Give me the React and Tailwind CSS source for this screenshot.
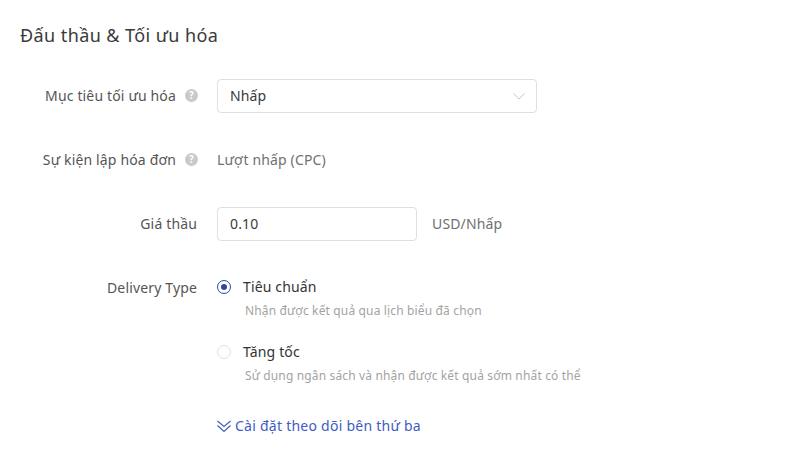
import React from 'react';

function Help() {
    return (
        <span className="ml-[9px] w-[13px] h-[13px] rounded-full bg-[#c8c9cc] text-white text-[10px] leading-[13px] font-bold text-center shrink-0 tracking-normal">?</span>
    );
}

function Label({ children, help }) {
    return (
        <div className={`w-[217px] shrink-0 flex items-center justify-end pb-[2px] ${help ? 'pr-[19px]' : 'pr-[20px]'}`}>
            <span>{children}</span>
            {help && <Help />}
        </div>
    );
}

function Radio({ checked, title, hint }) {
    return (
        <div>
            <div className="flex items-center h-[20px]">
                <span className={`w-[14px] h-[14px] rounded-full border flex items-center justify-center ${checked ? 'border-[#2b4a9b]' : 'border-[#dcdfe6]'}`}>
                    {checked && <span className="w-[6px] h-[6px] rounded-full bg-[#2b4a9b]"></span>}
                </span>
                <span className="ml-[12px] pb-[2px] text-[#333]">{title}</span>
            </div>
            <div className="ml-[28px] mt-[6px] text-[12px] tracking-[0.15px] leading-[16px] text-[#a3a3a3]">{hint}</div>
        </div>
    );
}

export default function App() {
    return (
        <div className="w-[794px] h-[459px] bg-white text-[14px] tracking-[0.15px] text-[#555] font-['Noto_Sans',sans-serif] overflow-hidden">
            <h2 className="pl-[20px] pt-[23px] text-[18px] tracking-[0.42px] leading-[24px] text-[#3a3a3a]">Đấu thầu &amp; Tối ưu hóa</h2>

            <div className="flex items-center mt-[32px] h-[34px]">
                <Label help>Mục tiêu tối ưu hóa</Label>
                <div className="w-[320px] h-[34px] border border-[#dcdfe6] rounded-[4px] flex items-center justify-between pl-[12px] pr-[11px] text-[#3a3a3a]">
                    <span className="pb-[2px]">Nhấp</span>
                    <svg width="12" height="7" viewBox="0 0 12 7" fill="none" stroke="#c0c4cc" strokeWidth="1"><path d="M0.5 0.5 L6 6 L11.5 0.5" /></svg>
                </div>
            </div>

            <div className="flex items-center mt-[30px] h-[34px]">
                <Label help>Sự kiện lập hóa đơn</Label>
                <span className="text-[#707070] pb-[2px]">Lượt nhấp (CPC)</span>
            </div>

            <div className="flex items-center mt-[30px] h-[34px]">
                <Label>Giá thầu</Label>
                <div className="w-[200px] h-[34px] border border-[#dcdfe6] rounded-[4px] flex items-center pl-[12px] text-[#3a3a3a]"><span className="pb-[2px]">0.10</span></div>
                <span className="ml-[15px] text-[#707070] pb-[2px]">USD/Nhấp</span>
            </div>

            <div className="flex mt-[30px]">
                <div className="w-[217px] shrink-0 h-[20px] flex items-center justify-end pr-[20px] mt-[6px]">Delivery Type</div>
                <div className="flex flex-col gap-[23px] mt-[6px]">
                    <Radio checked title="Tiêu chuẩn" hint="Nhận được kết quả qua lịch biểu đã chọn" />
                    <Radio title="Tăng tốc" hint="Sử dụng ngân sách và nhận được kết quả sớm nhất có thể" />
                    <div className="flex items-center text-[#3f5bc4] mt-[9px] h-[20px] tracking-[0.25px]">
                        <svg width="14" height="14" viewBox="0 0 14 14" fill="none" stroke="#3f5bc4" strokeWidth="1.1"><path d="M0.5 2 L7 7.5 L13.5 2" /><path d="M0.5 6.5 L7 12.5 L13.5 6.5" /></svg>
                        <span className="ml-[4px] pb-[1px]">Cài đặt theo dõi bên thứ ba</span>
                    </div>
                </div>
            </div>
        </div>
    );
}
